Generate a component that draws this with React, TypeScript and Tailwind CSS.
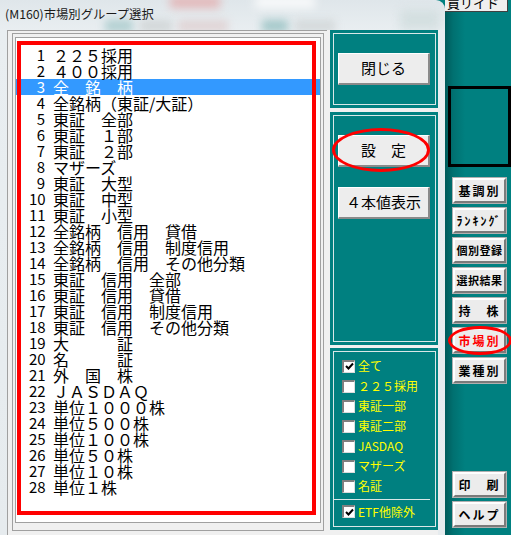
import React from 'react'

const listItems = [
  '２２５採用',
  '４００採用',
  '全　銘　柄',
  '全銘柄（東証/大証）',
  '東証　全部',
  '東証　１部',
  '東証　２部',
  'マザーズ',
  '東証　大型',
  '東証　中型',
  '東証　小型',
  '全銘柄　信用　貸借',
  '全銘柄　信用　制度信用',
  '全銘柄　信用　その他分類',
  '東証　信用　全部',
  '東証　信用　貸借',
  '東証　信用　制度信用',
  '東証　信用　その他分類',
  '大　　　証',
  '名　　　証',
  '外　国　株',
  'ＪＡＳＤＡＱ',
  '単位１０００株',
  '単位５００株',
  '単位１００株',
  '単位５０株',
  '単位１０株',
  '単位１株'
]

const markets = [
  { label: '全て', checked: true },
  { label: '２２５採用', checked: false },
  { label: '東証一部', checked: false },
  { label: '東証二部', checked: false },
  { label: 'JASDAQ', checked: false },
  { label: 'マザーズ', checked: false },
  { label: '名証', checked: false }
]

const sideButtons = [
  { label: '基調別', red: false, small: false },
  { label: 'ﾗﾝｷﾝｸﾞ', red: false, small: false },
  { label: '個別登録', red: false, small: true },
  { label: '選択結果', red: false, small: true },
  { label: '持　株', red: false, small: false },
  { label: '市場別', red: true, small: false },
  { label: '業種別', red: false, small: false }
]

function CheckBox({ checked }: { checked: boolean }) {
  return (
    <span className="flex h-[13px] w-[13px] shrink-0 items-center justify-center border-t-2 border-l-2 border-r border-b border-t-[#808080] border-l-[#808080] border-r-[#dcdcdc] border-b-[#dcdcdc] bg-white">
      {checked && (
        <svg width="9" height="9" viewBox="0 0 9 9">
          <path d="M1 4 L3.5 6.5 L8 1.5" stroke="#000" strokeWidth="2" fill="none" />
        </svg>
      )}
    </span>
  )
}

function DialogButton({ children }: { children: React.ReactNode }) {
  return (
    <div className="flex h-[32px] w-[92px] items-center justify-center border-t border-l border-white border-r-2 border-b-2 border-r-[#8a8a8a] border-b-[#8a8a8a] bg-[#ededed] text-[15px] text-black">
      {children}
    </div>
  )
}

function SideButton({ label, red, small }: { label: string; red: boolean; small?: boolean }) {
  return (
    <div
      className={`flex h-[25px] w-[53px] items-center justify-center whitespace-nowrap border-t-2 border-l-2 border-white border-r-2 border-b-2 border-r-[#7a7a7a] border-b-[#7a7a7a] bg-[#ececec] font-bold outline outline-1 outline-[#b0b0b0] ${
        small ? 'text-[11px] tracking-[0.5px]' : 'text-[12px] tracking-[2px]'
      } ${red ? 'text-[#ff0000]' : 'text-black'}`}
    >
      {label}
    </div>
  )
}

export default function App() {
  return (
    <div className="flex h-[535px] w-[511px] overflow-hidden bg-[#008080] font-['Noto_Sans_CJK_JP',sans-serif]">
      {/* dialog window */}
      <div className="relative flex h-full w-[445px] shrink-0 flex-col overflow-hidden rounded-tr-[9px] bg-[linear-gradient(180deg,#dfe6ea_0px,#e9eef1_30px,#e6ebee_100%)]">
        {/* blurred glass behind title */}
        <div className="pointer-events-none absolute inset-x-0 top-0 h-[30px] overflow-hidden">
          <div className="absolute left-[170px] top-[-4px] h-[12px] w-[50px] bg-[#e5a3a3] opacity-70 blur-[5px]" />
          <div className="absolute left-[255px] top-[-4px] h-[12px] w-[60px] bg-white opacity-80 blur-[5px]" />
          <div className="absolute left-[105px] top-[20px] h-[12px] w-[28px] bg-[#7bb2b2] opacity-50 blur-[4px]" />
          <div className="absolute left-[140px] top-[20px] h-[12px] w-[32px] bg-[#c4c8c8] opacity-60 blur-[4px]" />
          <div className="absolute left-[178px] top-[20px] h-[12px] w-[50px] bg-[#dcc4c4] opacity-60 blur-[4px]" />
          <div className="absolute left-[262px] top-[20px] h-[12px] w-[26px] bg-[#5fa3a3] opacity-50 blur-[4px]" />
          <div className="absolute left-[295px] top-[20px] h-[12px] w-[40px] bg-[#c7cccc] opacity-60 blur-[4px]" />
          <div className="absolute left-[400px] top-[10px] h-[20px] w-[40px] bg-[#c9d8d8] opacity-60 blur-[5px]" />
        </div>

        <div className="relative h-[30px] shrink-0 pl-[5px] pt-[6px] text-[12.3px] leading-[16px] text-[#1a1a1a]">
          (M160)市場別グループ選択
        </div>

        <div className="flex min-h-0 flex-1 pl-[7px] pr-[7px]">
          <div className="flex flex-1 bg-[#f0f0f0]">
            {/* list group */}
            <div className="flex w-[320px] flex-col border-t border-l border-[#a0a0a0] pt-[2px] pl-[4px] pr-[3px] pb-[4px]">
              <div className="flex flex-1 flex-col border border-[#a0a0a0] pt-[3px] pl-[2px] pr-[2px] pb-[7px]">
                <div className="relative flex-1 border border-[#a0a0a0] bg-white pl-[13px] pt-[9px]">
                  {listItems.map((text, i) => (
                    <div
                      key={i}
                      className={`-ml-[13px] flex h-[16px] items-center pl-[13px] ${
                        i === 2 ? 'bg-[#3399ff] text-white' : 'text-black'
                      }`}
                    >
                      <span className="w-[16px] text-right text-[15px] leading-[16px]">{i + 1}</span>
                      <span className="ml-[8px] whitespace-pre text-[16px] leading-[16px]">{text}</span>
                    </div>
                  ))}
                  <div className="pointer-events-none absolute left-[1px] top-[3px] right-[4px] bottom-[7px] border-[4px] border-[#ff0000]" />
                </div>
              </div>
            </div>

            {/* right column */}
            <div className="ml-[3px] flex w-[108px] flex-col">
              <div className="h-[78px] bg-[#008080] p-[3px] pr-[2px]">
                <div className="h-full border border-[#d8e8e8] pl-[4px] pt-[19px]">
                  <DialogButton>閉じる</DialogButton>
                </div>
              </div>

              <div className="mt-[4px] h-[233px] bg-[#008080] p-[3px] pr-[2px]">
                <div className="flex h-full flex-col gap-[20px] border border-[#d8e8e8] pl-[4px] pt-[19px]">
                  <div className="relative">
                    <DialogButton>設　定</DialogButton>
                    <div className="pointer-events-none absolute left-[-6px] top-[-7px] h-[44px] w-[98px] rounded-[50%] border-[3px] border-[#ff0000]" />
                  </div>
                  <DialogButton>４本値表示</DialogButton>
                </div>
              </div>

              <div className="mt-[3px] h-[182px] bg-[#008080] p-[3px] pr-[2px]">
                <div className="flex h-full flex-col border border-[#d8e8e8] pt-[4px]">
                  {markets.map((m) => (
                    <div key={m.label} className="flex h-[20px] items-center pl-[8px]">
                      <CheckBox checked={m.checked} />
                      <span className="ml-[3px] text-[12px] leading-[14px] text-[#ffff00]">{m.label}</span>
                    </div>
                  ))}
                  <div className="mt-[3px] mr-[5px] h-px bg-[#d8e8e8]" />
                  <div className="flex h-[20px] items-center pl-[8px] pt-[3px]">
                    <CheckBox checked />
                    <span className="ml-[3px] text-[12px] leading-[14px] text-[#ffff00]">ETF他除外</span>
                  </div>
                </div>
              </div>
            </div>
          </div>
        </div>
      </div>

      {/* main application strip */}
      <div className="flex flex-1 flex-col bg-[linear-gradient(90deg,#005a5a_0px,#007070_8px,#008080_20px,#008080_100%)]">
        <div className="h-[12px] w-[63px] shrink-0 overflow-hidden border-r border-b border-[#404040] bg-[#efefef] pl-[2px]">
          <div className="-mt-[5px] text-[13px] leading-[16px] text-black">買リイド</div>
        </div>
        <div className="ml-[3px] mt-[74px] h-[81px] w-[63px] shrink-0 border-[3px] border-black" />
        <div className="ml-[8px] mt-[11px] flex flex-col gap-[5px]">
          {sideButtons.map((b) => (
            <div key={b.label} className="relative">
              <SideButton label={b.label} red={b.red} small={b.small} />
              {b.red && (
                <div className="pointer-events-none absolute left-[-5px] top-[-2px] h-[29px] w-[64px] rounded-[50%] border-[3px] border-[#ff0000]" />
              )}
            </div>
          ))}
        </div>
        <div className="ml-[8px] mt-[89px] flex flex-col gap-[5px]">
          <SideButton label="印　刷" red={false} />
          <SideButton label="ヘルプ" red={false} />
        </div>
      </div>
    </div>
  )
}
